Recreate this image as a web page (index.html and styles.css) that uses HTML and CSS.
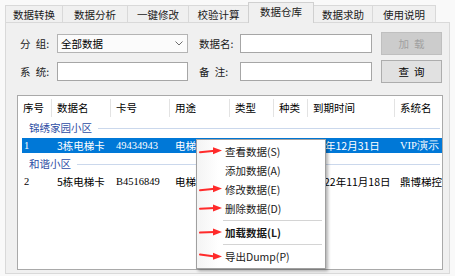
FILE: index.html
```html
<!DOCTYPE html>
<html lang="zh">
<head>
  <meta charset="UTF-8" />
  <title>数据仓库</title>
  <link rel="stylesheet" href="styles.css">
</head>
<body>
  <div class="window">
    <div class="tabs">
      <div class="tab w57">数据转换</div>
      <div class="tab w65">数据分析</div>
      <div class="tab w61">一键修改</div>
      <div class="tab w60">校验计算</div>
      <div class="tab active w65">数据仓库</div>
      <div class="tab w59">数据求助</div>
      <div class="tab w63">使用说明</div>
    </div>

    <div class="panel">
      <div class="form">
        <label class="lbl">分&ensp;组:</label>
        <div class="combo">
          <span>全部数据</span>
          <svg width="8" height="5" viewBox="0 0 8 5"><path d="M0.5 0.5 L4 4 L7.5 0.5" fill="none" stroke="#6d6d6d" stroke-width="1"/></svg>
        </div>
        <label class="lbl lbl2">数据名:</label>
        <div class="field"></div>
        <div class="btn disabled">加&ensp;载</div>

        <label class="lbl">系&ensp;统:</label>
        <div class="field"></div>
        <label class="lbl lbl2">备&ensp;注:</label>
        <div class="field"></div>
        <div class="btn">查&ensp;询</div>
      </div>

      <div class="list">
        <div class="head">
          <div>序号</div>
          <div>数据名</div>
          <div>卡号</div>
          <div>用途</div>
          <div>类型</div>
          <div>种类</div>
          <div>到期时间</div>
          <div>系统名</div>
        </div>

        <div class="group"><span>锦绣家园小区</span></div>
        <div class="row selected">
          <div class="num">1</div>
          <div>3栋电梯卡</div>
          <div class="num">49434943</div>
          <div>电梯</div>
          <div></div>
          <div></div>
          <div class="late">年12月31日</div>
          <div class="num">VIP演示</div>
        </div>

        <div class="group"><span>和谐小区</span></div>
        <div class="row">
          <div class="num">2</div>
          <div>5栋电梯卡</div>
          <div class="num">B4516849</div>
          <div>电梯</div>
          <div></div>
          <div></div>
          <div class="late">22年11月18日</div>
          <div>鼎博梯控</div>
        </div>
      </div>
    </div>

    <!-- right-click menu over the list -->
    <div class="menu">
      <div class="item"><svg class="arrow" width="24" height="10" viewBox="0 0 24 10"><path d="M1 6.2 L16 4.8" stroke="#ff2b2b" stroke-width="2" stroke-linecap="round"/><path d="M14 1.2 L23 4.6 L14 8.2 Z" fill="#ff2b2b"/></svg>查看数据(S)</div>
      <div class="item">添加数据(A)</div>
      <div class="item"><svg class="arrow" width="24" height="10" viewBox="0 0 24 10"><path d="M1 6.2 L16 4.8" stroke="#ff2b2b" stroke-width="2" stroke-linecap="round"/><path d="M14 1.2 L23 4.6 L14 8.2 Z" fill="#ff2b2b"/></svg>修改数据(E)</div>
      <div class="item"><svg class="arrow" width="24" height="10" viewBox="0 0 24 10"><path d="M1 5.8 L16 5" stroke="#ff2b2b" stroke-width="2" stroke-linecap="round"/><path d="M14 1.4 L23 5 L14 8.4 Z" fill="#ff2b2b"/></svg>删除数据(D)</div>
      <div class="sep"></div>
      <div class="item bold"><svg class="arrow" width="24" height="10" viewBox="0 0 24 10"><path d="M1 5.6 L16 5" stroke="#ff2b2b" stroke-width="2" stroke-linecap="round"/><path d="M14 1.4 L23 5 L14 8.4 Z" fill="#ff2b2b"/></svg>加载数据(L)</div>
      <div class="sep"></div>
      <div class="item"><svg class="arrow" width="24" height="10" viewBox="0 0 24 10"><path d="M1 3.6 L16 5.4" stroke="#ff2b2b" stroke-width="2" stroke-linecap="round"/><path d="M14 1.8 L23 5.6 L14 8.8 Z" fill="#ff2b2b"/></svg>导出Dump(P)</div>
    </div>
  </div>
</body>
</html>
```

FILE: styles.css
```css
body {
  margin: 0;
  background-color: #f9f9f9;
  font-family: "Noto Sans CJK SC", "Microsoft YaHei", sans-serif;
  font-size: 10.5px;
  color: #000;
}

.window {
  position: relative;
  width: 455px;
  height: 276px;
  overflow: hidden;
}

/* tab strip */
.tabs {
  display: flex;
  align-items: flex-end;
  height: 22px;
  padding-left: 5px;
}

.tab {
  height: 17px;
  line-height: 17px;
  box-sizing: border-box;
  border: 1px solid #d9d9d9;
  border-bottom: none;
  margin-left: -1px;
  background-color: #f0f0f0;
  text-align: center;
  color: #1a1a1a;
}

.tab:first-child {
  margin-left: 0;
}

.tab.active {
  position: relative;
  z-index: 1;
  height: 21px;
  line-height: 17px;
  margin-bottom: -1px;
  background-color: #f0f0f0;
  border-color: #d0d0d0;
}

.w57 { width: 58px; }
.w59 { width: 60px; }
.w60 { width: 61px; }
.w61 { width: 62px; }
.w63 { width: 64px; }
.w65 { width: 66px; }

/* tab page */
.panel {
  margin-left: 5px;
  width: 445px;
  height: 252px;
  box-sizing: border-box;
  border: 1px solid #d9d9d9;
  background-color: #f0f0f0;
  padding-top: 9px;
}

.form {
  display: grid;
  grid-template-columns: 37px 131px 52px 132px 70px;
  grid-auto-rows: 23px;
  row-gap: 5px;
  align-items: center;
  margin-left: 14px;
}

.lbl {
  line-height: 14px;
  color: #1a1a1a;
  white-space: nowrap;
}

.lbl2 {
  padding-left: 11px;
}

.field,
.combo {
  height: 19px;
  box-sizing: border-box;
  border: 1px solid #a6a6a6;
  background-color: #fff;
}

.combo {
  display: flex;
  align-items: center;
  justify-content: space-between;
  padding: 0 4px 0 3px;
  background-color: #fbfbfb;
  border-color: #b4b4b4;
  line-height: 16px;
}

.btn {
  margin-left: 9px;
  width: 61px;
  height: 23px;
  box-sizing: border-box;
  border: 1px solid #adadad;
  background-color: #e1e1e1;
  text-align: center;
  line-height: 21px;
  white-space: nowrap;
}

.btn.disabled {
  background-color: #cccccc;
  border-color: #bfbfbf;
  color: #a0a0a0;
}

/* list view */
.list {
  margin: 12px 0 0 11px;
  width: 426px;
  height: 175px;
  box-sizing: border-box;
  border: 1px solid #a9a9a9;
  background-color: #fff;
  overflow: hidden;
}

.head {
  display: grid;
  grid-template-columns: 34px 59px 59px 60px 44px 34px 87px 1fr;
  padding-top: 3px;
  height: 18px;
  line-height: 18px;
}

.head div {
  padding-left: 5px;
  border-right: 1px solid #e3e3e3;
  white-space: nowrap;
  overflow: hidden;
}

.head div:last-child {
  border-right: none;
}

.group {
  display: flex;
  align-items: center;
  height: 21px;
  box-sizing: border-box;
  padding: 4px 2px 3px 11px;
  line-height: 14px;
  color: #2d4da4;
}

.group::after {
  content: "";
  flex: 1;
  height: 1px;
  margin-left: 6px;
  background-color: #cbd8ec;
}

.row {
  display: grid;
  grid-template-columns: 30px 59px 59px 60px 44px 34px 87px 1fr;
  margin-left: 4px;
  height: 15px;
  line-height: 15px;
}

.row div {
  padding-left: 5px;
  white-space: nowrap;
  overflow: hidden;
}

.row div:first-child {
  padding-left: 2px;
}

/* date text starts where the menu ends */
.row .late {
  padding-left: 17px;
}

.row.selected .late {
  padding-left: 17px;
}

.row:not(.selected) .late {
  padding-left: 16px;
}

.row .num {
  font-family: "Liberation Serif", serif;
  font-size: 10.5px;
}

.row.selected {
  background-color: #0078d7;
  color: #fff;
}

/* context menu */
.menu {
  position: absolute;
  left: 196px;
  top: 139px;
  width: 130px;
  box-sizing: border-box;
  border: 1px solid #a0a0a0;
  background-color: #fff;
  background-image: linear-gradient(to right, #f4f4f4 0, #ffffff 22px);
  padding: 2px 0;
  box-shadow: 2px 2px 3px rgba(0, 0, 0, 0.3);
}

.item {
  position: relative;
  height: 19px;
  line-height: 19px;
  padding-left: 28px;
  color: #1a1a1a;
  white-space: nowrap;
}

.item.bold {
  font-weight: bold;
}

.arrow {
  position: absolute;
  left: 2px;
  top: 4px;
}

.sep {
  height: 5px;
  display: flex;
  align-items: center;
  padding: 0 3px 0 26px;
}

.sep::after {
  content: "";
  flex: 1;
  height: 1px;
  background-color: #d4d4d4;
}
```
